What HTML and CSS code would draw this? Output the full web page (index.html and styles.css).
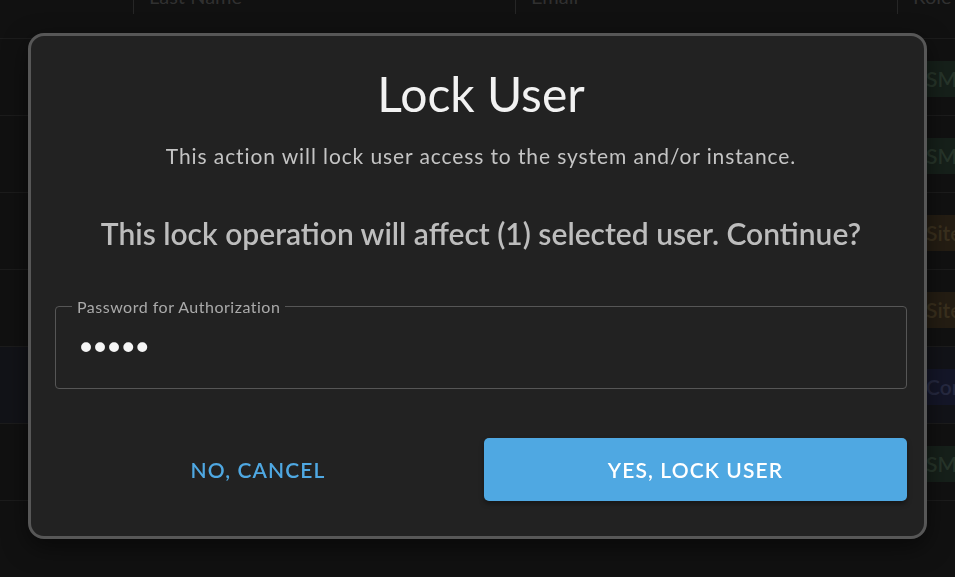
FILE: index.html
```html
<!DOCTYPE html>
<html>
<head>
<meta charset="utf-8">
<link rel="stylesheet" href="styles.css">
</head>
<body>
<div class="table">
  <div class="row head">
    <div class="cell first"></div>
    <div class="cell">Last Name</div>
    <div class="cell">Email</div>
    <div class="cell">Role</div>
  </div>
  <div class="row"><div class="cell first"></div><div class="cell"></div><div class="cell"></div><div class="cell"><span class="chip green">SMS User</span></div></div>
  <div class="row"><div class="cell first"></div><div class="cell"></div><div class="cell"></div><div class="cell"><span class="chip green">SMS User</span></div></div>
  <div class="row"><div class="cell first"></div><div class="cell"></div><div class="cell"></div><div class="cell"><span class="chip orange">Site Admin</span></div></div>
  <div class="row"><div class="cell first"></div><div class="cell"></div><div class="cell"></div><div class="cell"><span class="chip orange">Site Admin</span></div></div>
  <div class="row selected"><div class="cell first"></div><div class="cell"></div><div class="cell"></div><div class="cell"><span class="chip blue">Company</span></div></div>
  <div class="row"><div class="cell first"></div><div class="cell"></div><div class="cell"></div><div class="cell"><span class="chip green">SMS User</span></div></div>
  <div class="row"><div class="cell first"></div><div class="cell"></div><div class="cell"></div><div class="cell"></div></div>
</div>

<div class="overlay">
  <div class="modal">
    <h1 class="title">Lock User</h1>
    <p class="subtitle">This action will lock user access to the system and/or instance.</p>
    <p class="question">This lock operation will affect (1) selected user. Continue?</p>
    <fieldset class="field">
      <legend class="legend">Password for Authorization</legend>
      <input class="input" type="password" value="12345">
    </fieldset>
    <div class="actions">
      <button class="btn cancel">NO, CANCEL</button>
      <button class="btn confirm">YES, LOCK USER</button>
    </div>
  </div>
</div>
</body>
</html>
```
FILE: styles.css
```css
* { box-sizing: border-box; }
html, body {
  margin: 0;
  height: 100%;
  background: #111111;
  font-family: "Lato", "Open Sans", sans-serif;
  overflow: hidden;
}
.table {
  margin-top: -38px;
}
.row {
  display: grid;
  grid-template-columns: 133px 382px 382px 1fr;
  height: 77px;
  border-bottom: 1px solid #1c1c1c;
  align-items: center;
}
.row.head {
  align-items: start;
}
.row.head .cell {
  margin-top: 22px;
  height: 30px;
  color: #303030;
  font-size: 20px;
  line-height: 24px;
  padding-left: 15px;
  border-left: 1px solid #262626;
}
.row.head .cell.first { border-left: none; }
.row.selected { background: #121318; }
.cell { padding-left: 15px; }
.chip {
  display: inline-block;
  height: 36px;
  line-height: 36px;
  padding: 0 10px;
  margin-left: 4px;
  margin-top: 3px;
  font-size: 21px;
  font-weight: 600;
  white-space: nowrap;
}
.chip.green { background: #16201a; color: #27352a; }
.chip.orange { background: #241d13; color: #3a301e; }
.chip.blue { background: #141628; color: #262940; }

.overlay {
  position: fixed;
  inset: 0;
  display: flex;
  align-items: center;
  justify-content: center;
  padding-bottom: 6px;
}
.modal {
  width: 899px;
  background: #222222;
  border: 3px solid #575757;
  border-radius: 16px;
  padding: 30px 17px 35px 24px;
  text-align: center;
  box-shadow: 0 8px 24px rgba(0,0,0,0.5);
}
.title {
  margin: 0;
  font-size: 48px;
  font-weight: 400;
  line-height: 56px;
  color: #f2f2f2;
}
.subtitle {
  margin: 20px 0 0;
  font-size: 21px;
  line-height: 28px;
  letter-spacing: 0.9px;
  color: #c4c4c4;
}
.question {
  margin: 45px 0 0;
  font-size: 30px;
  font-weight: 600;
  line-height: 36px;
  color: #bdbdbd;
}
.field {
  margin: 46px 0 0;
  padding: 0 20px;
  border: 1px solid #565656;
  border-radius: 4px;
  height: 92px;
  text-align: left;
}
.legend {
  padding: 0 5px;
  margin-left: -4px;
  font-size: 16px;
  letter-spacing: 0.5px;
  color: #aaaaaa;
}
.input {
  display: block;
  width: 100%;
  height: 40px;
  margin-top: 12px;
  background: transparent;
  border: none;
  outline: none;
  color: #f5f5f5;
  font-family: "DejaVu Sans", sans-serif;
  font-size: 34px;
  letter-spacing: -6px;
  padding: 0;
}
.actions {
  display: flex;
  gap: 23px;
  margin-top: 49px;
}
.btn {
  height: 63px;
  border: none;
  border-radius: 5px;
  font-family: inherit;
  font-size: 21px;
  font-weight: 600;
  letter-spacing: 1.1px;
  cursor: pointer;
}
.cancel {
  width: 406px;
  background: transparent;
  color: #4fa8e2;
}
.confirm {
  flex: 1;
  background: #4fa8e2;
  color: #ffffff;
  box-shadow: 0 3px 5px rgba(0,0,0,0.35);
}
```
